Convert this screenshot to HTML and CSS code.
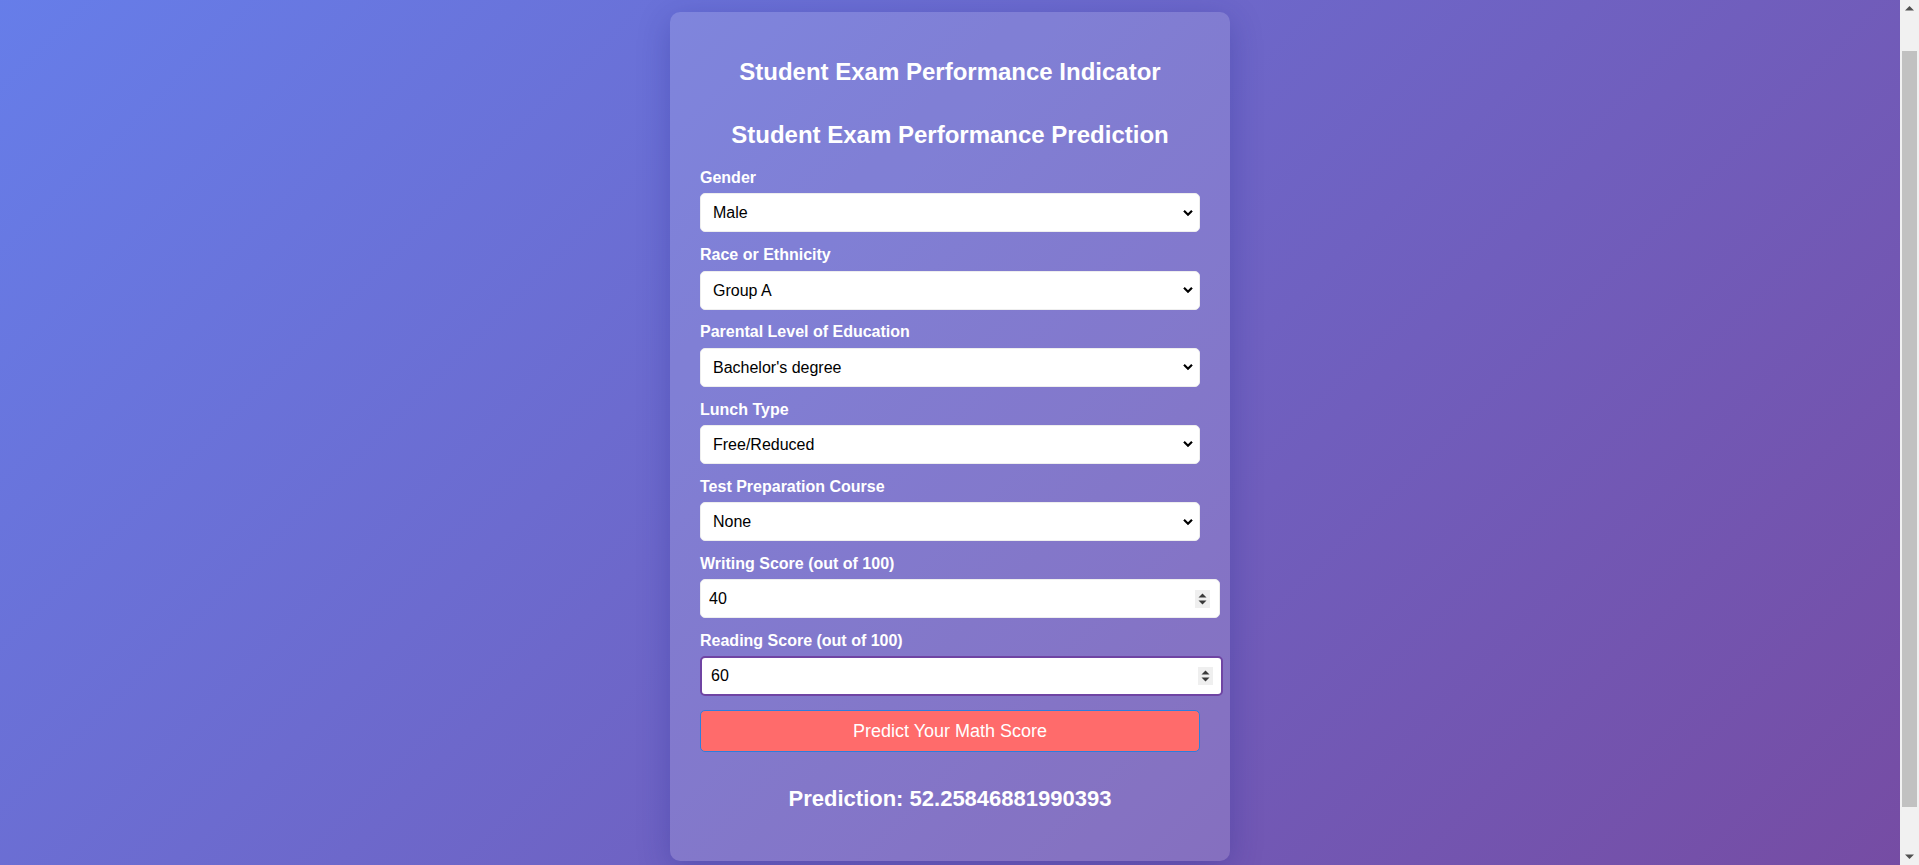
FILE: index.html
```html
<!DOCTYPE html>
<html lang="en">
<head>
<meta charset="utf-8">
<title>Student Exam Performance Indicator</title>
<link rel="stylesheet" href="styles.css">
</head>
<body>
<div class="page">
  <div class="card">
    <h1 class="title">Student Exam Performance Indicator</h1>
    <form class="form" action="#" onsubmit="return false;">
      <h2 class="subtitle">Student Exam Performance Prediction</h2>

      <div class="group">
        <label class="label" for="gender">Gender</label>
        <div class="select-wrap">
          <select class="select" id="gender" name="gender">
            <option selected>Male</option>
            <option>Female</option>
          </select>
          <svg class="chev" width="10" height="7" viewBox="0 0 10 7" aria-hidden="true"><path d="M1 1.2 L5 5.2 L9 1.2" fill="none" stroke="#000" stroke-width="2.2"/></svg>
        </div>
      </div>

      <div class="group">
        <label class="label" for="ethnicity">Race or Ethnicity</label>
        <div class="select-wrap">
          <select class="select" id="ethnicity" name="ethnicity">
            <option selected>Group A</option>
            <option>Group B</option>
            <option>Group C</option>
            <option>Group D</option>
            <option>Group E</option>
          </select>
          <svg class="chev" width="10" height="7" viewBox="0 0 10 7" aria-hidden="true"><path d="M1 1.2 L5 5.2 L9 1.2" fill="none" stroke="#000" stroke-width="2.2"/></svg>
        </div>
      </div>

      <div class="group">
        <label class="label" for="education">Parental Level of Education</label>
        <div class="select-wrap">
          <select class="select" id="education" name="education">
            <option>Associate's degree</option>
            <option selected>Bachelor's degree</option>
            <option>High school</option>
            <option>Master's degree</option>
            <option>Some college</option>
            <option>Some high school</option>
          </select>
          <svg class="chev" width="10" height="7" viewBox="0 0 10 7" aria-hidden="true"><path d="M1 1.2 L5 5.2 L9 1.2" fill="none" stroke="#000" stroke-width="2.2"/></svg>
        </div>
      </div>

      <div class="group">
        <label class="label" for="lunch">Lunch Type</label>
        <div class="select-wrap">
          <select class="select" id="lunch" name="lunch">
            <option selected>Free/Reduced</option>
            <option>Standard</option>
          </select>
          <svg class="chev" width="10" height="7" viewBox="0 0 10 7" aria-hidden="true"><path d="M1 1.2 L5 5.2 L9 1.2" fill="none" stroke="#000" stroke-width="2.2"/></svg>
        </div>
      </div>

      <div class="group">
        <label class="label" for="prep">Test Preparation Course</label>
        <div class="select-wrap">
          <select class="select" id="prep" name="prep">
            <option selected>None</option>
            <option>Completed</option>
          </select>
          <svg class="chev" width="10" height="7" viewBox="0 0 10 7" aria-hidden="true"><path d="M1 1.2 L5 5.2 L9 1.2" fill="none" stroke="#000" stroke-width="2.2"/></svg>
        </div>
      </div>

      <div class="group">
        <label class="label" for="writing">Writing Score (out of 100)</label>
        <div class="num-wrap">
          <input class="num" id="writing" type="text" inputmode="numeric" value="40">
          <svg class="spin" width="15" height="18" viewBox="0 0 15 18" aria-hidden="true">
            <rect width="15" height="18" fill="#efefef"/>
            <polygon points="3.5,7.5 11.5,7.5 7.5,3.5" fill="#3a3a3a"/>
            <polygon points="3.5,10.5 11.5,10.5 7.5,14.5" fill="#3a3a3a"/>
          </svg>
        </div>
      </div>

      <div class="group">
        <label class="label" for="reading">Reading Score (out of 100)</label>
        <div class="num-wrap num-wrap-focus">
          <input class="num num-focus" id="reading" type="text" inputmode="numeric" value="60">
          <svg class="spin" width="15" height="18" viewBox="0 0 15 18" aria-hidden="true">
            <rect width="15" height="18" fill="#efefef"/>
            <polygon points="3.5,7.5 11.5,7.5 7.5,3.5" fill="#3a3a3a"/>
            <polygon points="3.5,10.5 11.5,10.5 7.5,14.5" fill="#3a3a3a"/>
          </svg>
        </div>
      </div>

      <button class="btn" type="submit">Predict Your Math Score</button>
    </form>
    <h2 class="result">Prediction: 52.25846881990393</h2>
  </div>
</div>

<div class="scrollbar" aria-hidden="true">
  <svg class="sb-arrow sb-up" width="19" height="17" viewBox="0 0 19 17"><polygon points="5,10.5 14,10.5 9.5,6" fill="#505050"/></svg>
  <div class="sb-track"><div class="sb-thumb"></div></div>
  <svg class="sb-arrow sb-down" width="19" height="17" viewBox="0 0 19 17"><polygon points="5,6.5 14,6.5 9.5,11" fill="#505050"/></svg>
</div>

<script src="script.js"></script>
</body>
</html>
```

FILE: styles.css
```css
html {
  background: linear-gradient(135deg, #667eea 0%, #764ba2 100%);
  min-height: 100%;
}

body {
  margin: 0 19px 0 0;
  font-family: "Liberation Sans", Arial, sans-serif;
  color: #fff;
}

.page {
  padding: 50px 0;
}

.card {
  width: 500px;
  margin: 0 auto;
  padding: 30px;
  border-radius: 10px;
  background: rgba(255, 255, 255, 0.14);
  box-shadow: 0 8px 32px rgba(31, 38, 135, 0.3);
}

.title {
  margin: 16px 0;
  font-size: 24px;
  font-weight: bold;
  text-align: center;
}

.form {
  margin: 0;
}

.subtitle {
  margin: 35.2px 0 19.9px;
  font-size: 24px;
  font-weight: bold;
  text-align: center;
}

.group {
  margin-bottom: 13.9px;
}

.label {
  display: block;
  margin-bottom: 6.3px;
  font-size: 16px;
  font-weight: bold;
}

.select-wrap {
  position: relative;
}

.select {
  display: block;
  box-sizing: border-box;
  width: 100%;
  height: 39px;
  padding: 0 24px 0 12px;
  border: 1px solid #eee;
  border-radius: 5px;
  background-color: #fff;
  color: #000;
  font-family: "Liberation Sans", Arial, sans-serif;
  font-size: 16px;
  appearance: none;
  -webkit-appearance: none;
}

.chev {
  position: absolute;
  right: 7px;
  top: 50%;
  transform: translateY(-50%);
  pointer-events: none;
}

.num-wrap {
  position: relative;
  width: 520px;
}

.num-wrap-focus {
  width: 522.7px;
}

.num {
  display: block;
  box-sizing: border-box;
  width: 100%;
  height: 38.7px;
  padding: 0 8px;
  border: 1px solid #eee;
  border-radius: 5px;
  background: #fff;
  color: #000;
  font-family: "Liberation Sans", Arial, sans-serif;
  font-size: 16px;
  outline: none;
}

.num-focus {
  height: 40px;
  padding-left: 9px;
  border: 2px solid #6f44a3;
}

.spin {
  position: absolute;
  right: 10px;
  top: 50%;
  transform: translateY(-50%);
}

.btn {
  display: block;
  box-sizing: border-box;
  width: 100%;
  height: 42px;
  margin-top: 3.5px;
  padding: 0;
  border: 1px solid #2f7ddc;
  border-radius: 5px;
  background: #ff6b6b;
  color: #fff;
  font-family: "Liberation Sans", Arial, sans-serif;
  font-size: 18px;
  cursor: pointer;
}

.result {
  margin: 34.3px 0 18.3px;
  font-size: 22px;
  font-weight: bold;
  text-align: center;
}

/* drawn copy of the window scrollbar seen in the reference */
.scrollbar {
  position: fixed;
  top: 0;
  right: 0;
  width: 19px;
  height: 100vh;
  display: flex;
  flex-direction: column;
  background: #f1f1f1;
}

.sb-arrow {
  display: block;
  flex: none;
}

.sb-track {
  flex: 1;
  padding: 34px 2px 41px;
}

.sb-thumb {
  height: 100%;
  background: #c1c1c1;
}
```

FILE: script.js
```js
window.scrollTo(0, 38);
```
